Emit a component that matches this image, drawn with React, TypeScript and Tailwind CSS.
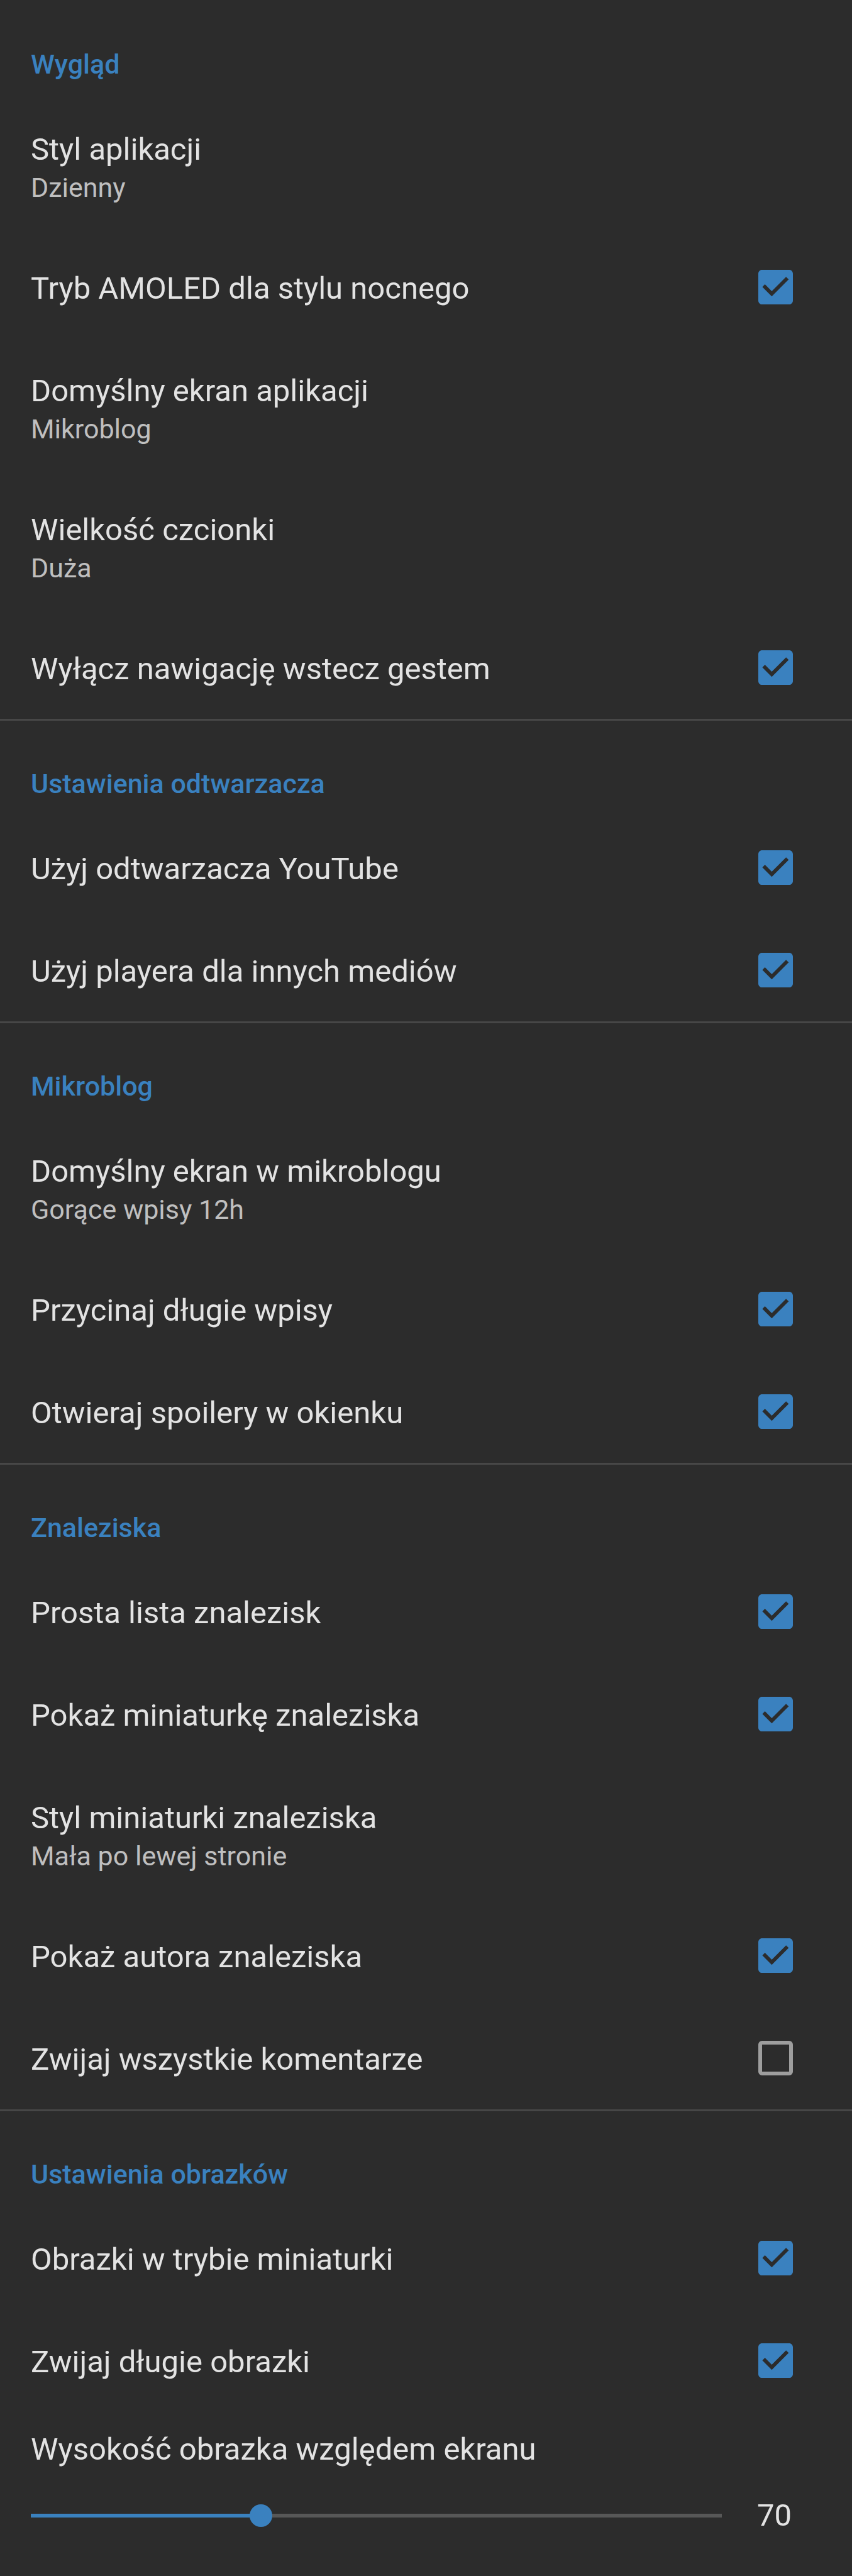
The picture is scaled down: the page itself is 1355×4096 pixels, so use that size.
import { useId, useState } from "react";

type Item =
  | { kind: "choice"; title: string; value: string }
  | { kind: "check"; title: string; checked: boolean }
  | { kind: "range"; title: string; value: number; min: number; max: number };

type SectionData = { title: string; items: Item[] };

const check = (title: string, checked = true): Item => ({ kind: "check", title, checked });
const choice = (title: string, value: string): Item => ({ kind: "choice", title, value });

const SECTIONS: SectionData[] = [
  {
    title: "Wygląd",
    items: [
      choice("Styl aplikacji", "Dzienny"),
      check("Tryb AMOLED dla stylu nocnego"),
      choice("Domyślny ekran aplikacji", "Mikroblog"),
      choice("Wielkość czcionki", "Duża"),
      check("Wyłącz nawigację wstecz gestem"),
    ],
  },
  {
    title: "Ustawienia odtwarzacza",
    items: [check("Użyj odtwarzacza YouTube"), check("Użyj playera dla innych mediów")],
  },
  {
    title: "Mikroblog",
    items: [
      choice("Domyślny ekran w mikroblogu", "Gorące wpisy 12h"),
      check("Przycinaj długie wpisy"),
      check("Otwieraj spoilery w okienku"),
    ],
  },
  {
    title: "Znaleziska",
    items: [
      check("Prosta lista znalezisk"),
      check("Pokaż miniaturkę znaleziska"),
      choice("Styl miniaturki znaleziska", "Mała po lewej stronie"),
      check("Pokaż autora znaleziska"),
      check("Zwijaj wszystkie komentarze", false),
    ],
  },
  {
    title: "Ustawienia obrazków",
    items: [
      check("Obrazki w trybie miniaturki"),
      check("Zwijaj długie obrazki"),
      { kind: "range", title: "Wysokość obrazka względem ekranu", value: 70, min: 55, max: 100 },
    ],
  },
];

function ChoiceRow({ title, value }: { title: string; value: string }) {
  return (
    <button type="button" className="flex w-full flex-col gap-[7px] px-[49px] pt-[55px] pb-[52px] text-left">
      <span className="text-[49px] leading-[57px] text-[#e3e3e3]">{title}</span>
      <span className="text-[43px] leading-[50px] text-[#bfbfbf]">{value}</span>
    </button>
  );
}

function CheckRow({ title, checked }: { title: string; checked: boolean }) {
  const id = useId();
  const [on, setOn] = useState(checked);
  return (
    <div className="flex items-center justify-between pr-[94px] pl-[49px]">
      <label htmlFor={id} className="flex-1 pt-[55px] pb-[51px] text-[49px] leading-[57px] text-[#e3e3e3]">
        {title}
      </label>
      <span className="grid size-[55px] shrink-0">
        <input
          id={id}
          type="checkbox"
          checked={on}
          onChange={(e) => setOn(e.target.checked)}
          className="peer col-start-1 row-start-1 size-full appearance-none rounded-[6px] border-[6px] border-[#9e9e9e] checked:border-0"
        />
        <svg
          viewBox="3 3 18 18"
          aria-hidden="true"
          className="pointer-events-none invisible col-start-1 row-start-1 size-full fill-[#3a81bf] peer-checked:visible"
        >
          <path d="M19 3H5c-1.11 0-2 .9-2 2v14c0 1.1.89 2 2 2h14c1.11 0 2-.9 2-2V5c0-1.1-.89-2-2-2zm-9 13.8l-4.9-4.9 1.35-1.35L10 14.1l7.45-7.45L18.8 8l-8.8 8.8z" />
        </svg>
      </span>
    </div>
  );
}

function RangeRow({ title, value, min, max }: { title: string; value: number; min: number; max: number }) {
  const id = useId();
  const [current, setCurrent] = useState(value);
  const percent = ((current - min) / (max - min)) * 100;
  return (
    <div className="flex flex-col gap-[48px] pt-[31px] pb-[68px] pl-[49px]">
      <label htmlFor={id} className="text-[49px] leading-[57px] text-[#e3e3e3]">
        {title}
      </label>
      <div className="flex items-center gap-[56px]">
        <div className="grid flex-1 items-center">
          <div className="col-start-1 row-start-1 h-[6px] bg-[#575757]">
            <div className="h-full bg-[#3a81bf]" style={{ width: `${percent}%` }} />
          </div>
          <input
            id={id}
            type="range"
            min={min}
            max={max}
            value={current}
            onChange={(e) => setCurrent(Number(e.target.value))}
            className="col-start-1 row-start-1 -mx-[18px] h-[36px] appearance-none bg-transparent [&::-webkit-slider-thumb]:size-[36px] [&::-webkit-slider-thumb]:appearance-none [&::-webkit-slider-thumb]:rounded-full [&::-webkit-slider-thumb]:bg-[#3a81bf]"
          />
        </div>
        <output htmlFor={id} className="w-[151px] text-[49px] leading-[57px] text-[#e3e3e3]">
          {current}
        </output>
      </div>
    </div>
  );
}

function Row({ item }: { item: Item }) {
  if (item.kind === "choice") return <ChoiceRow title={item.title} value={item.value} />;
  if (item.kind === "check") return <CheckRow title={item.title} checked={item.checked} />;
  return <RangeRow title={item.title} value={item.value} min={item.min} max={item.max} />;
}

export default function App() {
  return (
    <main className="min-h-screen bg-[#2c2c2c] pt-[2px] font-[Roboto,sans-serif]">
      {SECTIONS.map((section) => (
        <section key={section.title} className="border-t-[3px] border-[#474747] first:border-t-0">
          <h2 className="px-[49px] pt-[75px] pb-[27px] text-[43px] leading-[50px] font-medium text-[#3a81bf]">
            {section.title}
          </h2>
          {section.items.map((item) => (
            <Row key={item.title} item={item} />
          ))}
        </section>
      ))}
    </main>
  );
}
